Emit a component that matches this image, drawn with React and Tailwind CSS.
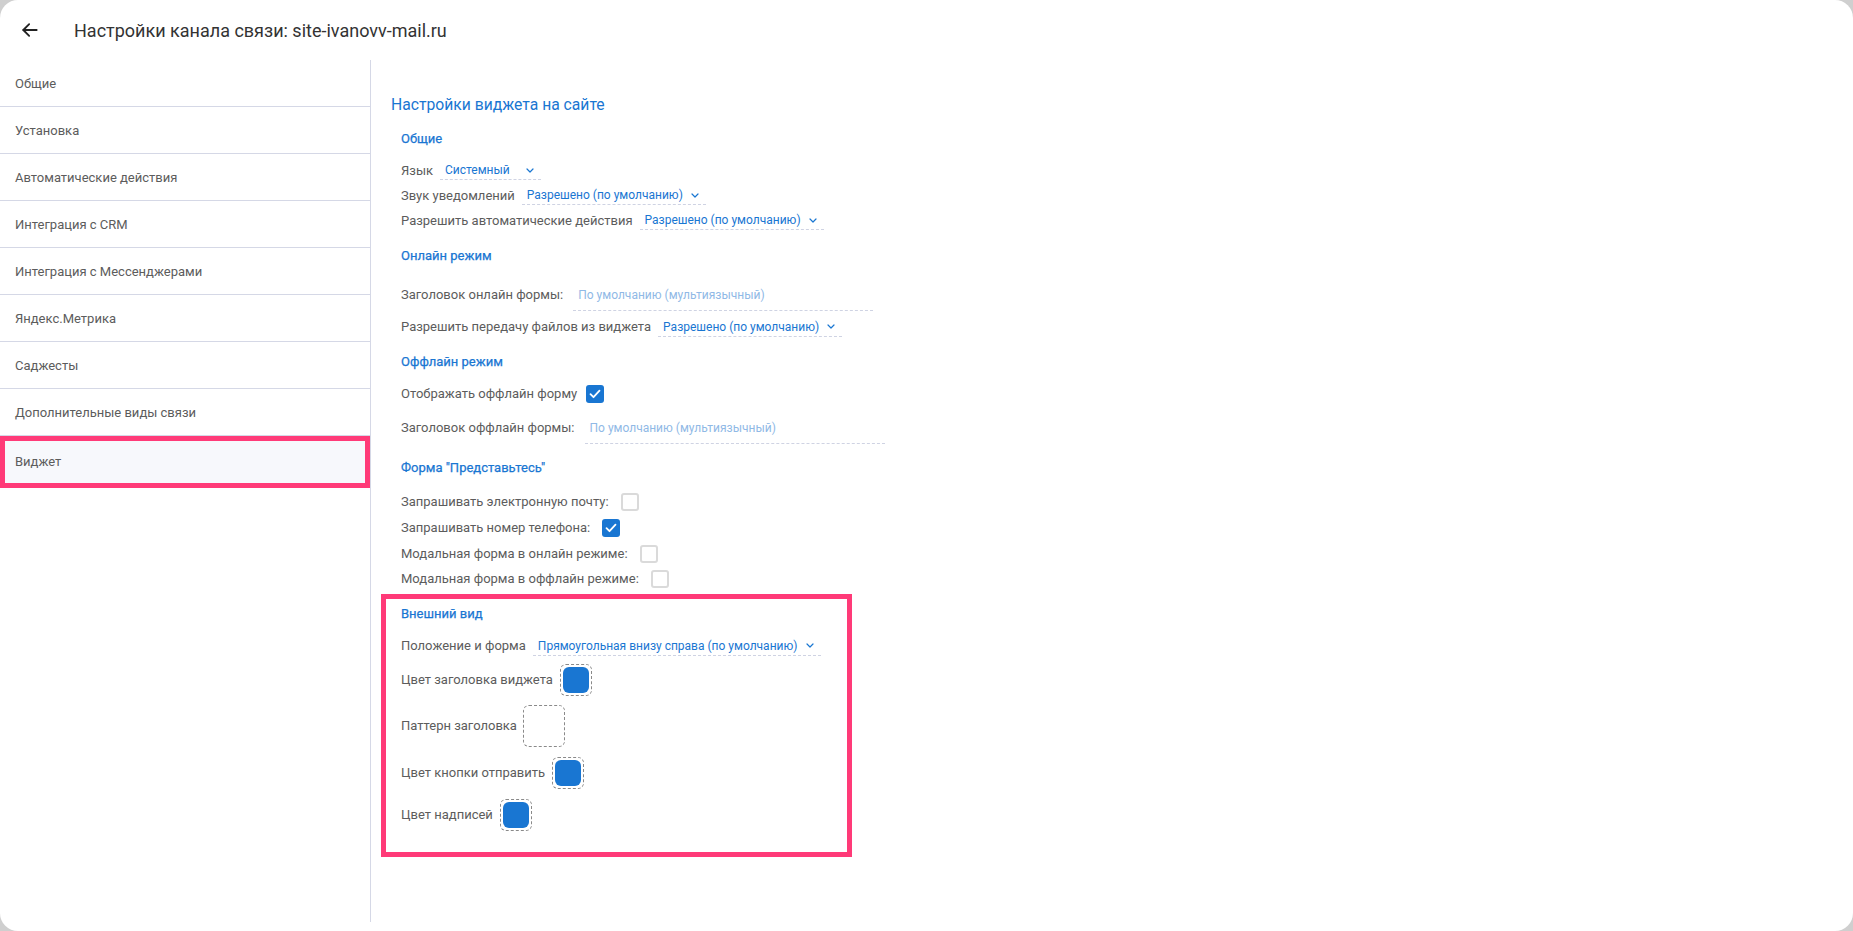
import React from "react";

const font = { fontFamily: "Roboto, 'Noto Sans', Arial, sans-serif" };

function Chevron() {
  return (
    <svg width="8" height="5" viewBox="0 0 8 5" fill="none" className="shrink-0">
      <path d="M1 1l3 3 3-3" stroke="#1976d2" strokeWidth="1.2" strokeLinecap="round" strokeLinejoin="round" />
    </svg>
  );
}

function Select({ value, w }) {
  return (
    <div
      className="ml-[7px] h-[19px] flex items-center justify-between pl-[5px] pr-[7px] border-b border-dashed border-[#cfd3e3] text-[12px] text-[#1976d2]"
      style={{ width: w }}
    >
      <span className="whitespace-nowrap">{value}</span>
      <Chevron />
    </div>
  );
}

function Label({ children }) {
  return <span className="text-[13px] text-[#5c5c5c] whitespace-nowrap">{children}</span>;
}

function Heading({ children, className = "" }) {
  return (
    <div className={"h-[28px] flex items-center text-[13px] font-normal text-[#1976d2] [-webkit-text-stroke:0.25px_#1976d2] " + className}>
      {children}
    </div>
  );
}

function Checkbox({ checked, ml }) {
  if (checked) {
    return (
      <div className={"w-[18px] h-[18px] rounded-[3px] bg-[#1976d2] flex items-center justify-center " + ml}>
        <svg width="12" height="10" viewBox="0 0 12 10" fill="none">
          <path d="M1.5 5.2l3 3 6-6.5" stroke="white" strokeWidth="1.8" strokeLinecap="round" strokeLinejoin="round" />
        </svg>
      </div>
    );
  }
  return <div className={"w-[18px] h-[18px] rounded-[3px] border-2 border-[#dadada] bg-white " + ml} />;
}

function Input({ ml }) {
  return (
    <div className={"w-[300px] h-[32px] flex items-center pl-[5px] border-b border-dashed border-[#cfd3e3] text-[12px] text-[#90b9e6] " + ml}>
      По умолчанию (мультиязычный)
    </div>
  );
}

function Swatch({ filled }) {
  return (
    <div className="ml-[7px] w-[32px] h-[32px] rounded-[6px] border border-dashed border-[#8a8a8a] p-[2px]">
      {filled && <div className="w-full h-full rounded-[6px] bg-[#1976d2]" />}
    </div>
  );
}

const navItems = [
  "Общие",
  "Установка",
  "Автоматические действия",
  "Интеграция с CRM",
  "Интеграция с Мессенджерами",
  "Яндекс.Метрика",
  "Саджесты",
  "Дополнительные виды связи",
];

export default function App() {
  return (
    <div className="w-full h-[931px] bg-[#cfcfcf]" style={font}>
      <div className="w-full h-full bg-white rounded-[18px] overflow-hidden flex flex-col">
        <div className="h-[60px] flex items-center pl-[20px] shrink-0">
          <svg width="20" height="20" viewBox="0 0 24 24" fill="none" stroke="#222" strokeWidth="2.2" strokeLinecap="round" strokeLinejoin="round">
            <path d="M20 12H4" />
            <path d="M11 5l-7 7 7 7" />
          </svg>
          <span className="ml-[34px] text-[18px] text-[#333]">Настройки канала связи: site-ivanovv-mail.ru</span>
        </div>
        <div className="flex-1 flex pb-[9px]">
          <div className="w-[371px] shrink-0 border-r border-[#d5d8e6]">
            {navItems.map((t) => (
              <div key={t} className="h-[47px] flex items-center px-[15px] pt-[1px] border-b border-[#d5d8e6] text-[13px] text-[#5c5c5c]">
                {t}
              </div>
            ))}
            <div className="h-[52px] flex items-center pl-[10px] border-[5px] border-[#ff3a78] bg-[#f7f8fc] text-[13px] text-[#5c5c5c]">
              Виджет
            </div>
          </div>
          <div className="flex-1 pl-[20px] pt-[25px]">
            <div className="h-[40px] flex items-center text-[15.7px] text-[#1976d2]">Настройки виджета на сайте</div>
            <div className="pl-[10px]">
              <Heading>Общие</Heading>
              <div className="mt-[5px] h-[25px] flex items-center">
                <Label>Язык</Label>
                <Select value="Системный" w="101px" />
              </div>
              <div className="h-[25px] flex items-center">
                <Label>Звук уведомлений</Label>
                <Select value="Разрешено (по умолчанию)" w="184px" />
              </div>
              <div className="h-[25px] flex items-center">
                <Label>Разрешить автоматические действия</Label>
                <Select value="Разрешено (по умолчанию)" w="184px" />
              </div>

              <Heading className="mt-[9px]">Онлайн режим</Heading>
              <div className="mt-[9px] h-[32px] flex items-center">
                <Label>Заголовок онлайн формы:</Label>
                <Input ml="ml-[10px]" />
              </div>
              <div className="mt-[3px] h-[26px] flex items-center">
                <Label>Разрешить передачу файлов из виджета</Label>
                <Select value="Разрешено (по умолчанию)" w="184px" />
              </div>

              <Heading className="mt-[8px]">Оффлайн режим</Heading>
              <div className="mt-[5px] h-[26px] flex items-center">
                <Label>Отображать оффлайн форму</Label>
                <Checkbox checked ml="ml-[9px]" />
              </div>
              <div className="mt-[5px] h-[32px] flex items-center">
                <Label>Заголовок оффлайн формы:</Label>
                <Input ml="ml-[10px]" />
              </div>

              <Heading className="mt-[10px]">Форма "Представьтесь"</Heading>
              <div className="mt-[7px] h-[26px] flex items-center">
                <Label>Запрашивать электронную почту:</Label>
                <Checkbox ml="ml-[12px]" />
              </div>
              <div className="h-[25.7px] flex items-center">
                <Label>Запрашивать номер телефона:</Label>
                <Checkbox checked ml="ml-[12px]" />
              </div>
              <div className="h-[25.7px] flex items-center">
                <Label>Модальная форма в онлайн режиме:</Label>
                <Checkbox ml="ml-[12px]" />
              </div>
              <div className="h-[25.7px] flex items-center">
                <Label>Модальная форма в оффлайн режиме:</Label>
                <Checkbox ml="ml-[12px]" />
              </div>
            </div>

            <div className="mt-[2px] ml-[-10px] w-[471px] border-[5px] border-[#ff3a78] pl-[15px] pt-[1px] pb-[21px]">
              <Heading>Внешний вид</Heading>
              <div className="mt-[5px] h-[26px] flex items-center">
                <Label>Положение и форма</Label>
                <Select value="Прямоугольная внизу справа (по умолчанию)" w="288px" />
              </div>
              <div className="mt-[5px] h-[32px] flex items-center">
                <Label>Цвет заголовка виджета</Label>
                <Swatch filled />
              </div>
              <div className="mt-[9px] h-[42px] flex items-center">
                <Label>Паттерн заголовка</Label>
                <div className="ml-[6px] w-[42px] h-[42px] rounded-[6px] border border-dashed border-[#8a8a8a]" />
              </div>
              <div className="mt-[10px] h-[32px] flex items-center">
                <Label>Цвет кнопки отправить</Label>
                <Swatch filled />
              </div>
              <div className="mt-[10px] h-[32px] flex items-center">
                <Label>Цвет надписей</Label>
                <Swatch filled />
              </div>
            </div>
          </div>
        </div>
      </div>
    </div>
  );
}
